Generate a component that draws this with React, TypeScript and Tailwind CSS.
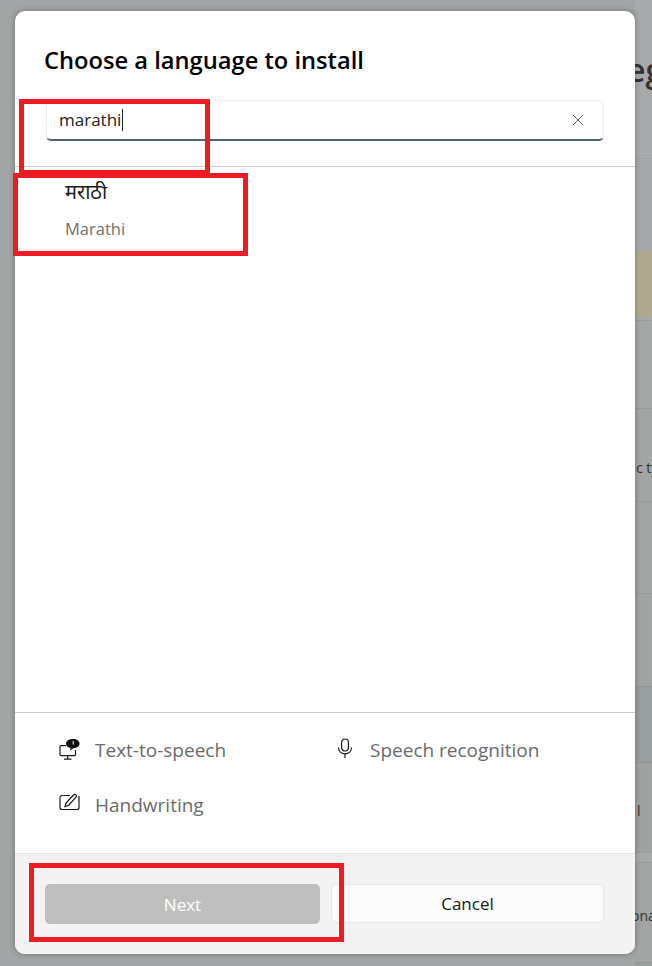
const font = { fontFamily: '"Open Sans", "Noto Sans", "Noto Sans Devanagari", "Lohit Devanagari", sans-serif' };

function SpeechIcon() {
    return (
        <svg width="22" height="22" viewBox="0 0 22 22" fill="none" stroke="#1a1a1a" strokeWidth="1.2" className="block">
            <path d="M7 6.600H2a1 1 0 0 0-1 1v8a1 1 0 0 0 1 1h13.500a1 1 0 0 0 1-1V11" />
            <path d="M8.700 16.700v3.300M5 20.200h7.500" />
            <path d="M14 0C10 0 7 2 7 4.800c0 2.200 1.900 3.800 4.600 4.200L11 11.500l3.800-2.500C18 8.800 20.500 7.200 20.500 4.700 20.500 2 18 0 14 0Z" fill="#111" stroke="none" />
            <path d="M14.200 2v3.500" stroke="#fff" strokeWidth="1" />
        </svg>
    );
}

function PenIcon() {
    return (
        <svg width="21" height="18" viewBox="0 0 21 18" fill="none" stroke="#1a1a1a" strokeWidth="1.2" className="block">
            <path d="M11 2.500H3a2 2 0 0 0-2 2v10a2 2 0 0 0 2 2h15a2 2 0 0 0 2-2V3" />
            <path d="M6 13.500l1-3.500 7.500-8a1.500 1.500 0 0 1 2.500 2.200l-7.300 8L6 13.500Z" />
        </svg>
    );
}

function MicIcon() {
    return (
        <svg width="16" height="21" viewBox="0 0 16 21" fill="none" stroke="#1a1a1a" strokeWidth="1.2" className="block">
            <rect x="4.600" y="1" width="6.800" height="12" rx="3.400" />
            <path d="M1.500 9.500c0 3.800 2.800 6.300 6.500 6.300s6.500-2.500 6.500-6.300M8 15.800V20" />
        </svg>
    );
}

function Feature({ icon, label, iconBox }: { icon: React.ReactNode; label: string; iconBox: string }) {
    return (
        <div className="flex items-center h-[55px]">
            <div className={iconBox}>{icon}</div>
            <span className="text-[19px] text-[#6b6b6b]">{label}</span>
        </div>
    );
}

function BackdropRow({ className, children }: { className: string; children?: React.ReactNode }) {
    return <div className={className}>{children}</div>;
}

export default function App() {
    return (
        <div className="relative w-[652px] h-[966px] overflow-hidden bg-[#a2a5a5]" style={font}>
            {/* page behind the dialog, only the right edge shows */}
            <div className="ml-auto w-[17px] h-full flex flex-col text-[#333333] overflow-hidden">
                <BackdropRow className="h-[154px] bg-[#a8a9ab] border-b border-[#b0b1b2] overflow-hidden whitespace-nowrap">
                    <div className="pt-[50px] text-[32px] leading-[40px] font-semibold -ml-[8px]">eg</div>
                </BackdropRow>
                <BackdropRow className="h-[97px] bg-[#a7a8a9]" />
                <BackdropRow className="h-[65px] bg-[#b0a98f]" />
                <BackdropRow className="h-[4px] bg-[#a8a9a9]" />
                <BackdropRow className="h-[88px] bg-[#a5a6a6] border-t border-[#9b9c9c]" />
                <BackdropRow className="h-[93px] bg-[#a3a4a4] border-t border-[#979a9a] flex items-start whitespace-nowrap text-[14px] pt-[48px] pl-[1px]">c ty</BackdropRow>
                <BackdropRow className="h-[92px] bg-[#a3a4a4] border-t border-[#979a9a]" />
                <BackdropRow className="h-[93px] bg-[#a2a4a4] border-t border-[#979a9a]" />
                <BackdropRow className="h-[76px] bg-[#99a09f] border-t border-[#90999a]" />
                <BackdropRow className="h-[90px] bg-[#a0a2a2] border-t border-[#939696] text-[14px] pt-[37px] pl-[2px]">l</BackdropRow>
                <BackdropRow className="h-[10px] bg-[#a8a9a9] border-t border-[#9a9b9b]" />
                <BackdropRow className="h-[100px] bg-[#a3a4a4] border-t border-[#9a9b9b] whitespace-nowrap text-[14px] pt-[42px] -ml-[4px]">ona</BackdropRow>
                <BackdropRow className="h-[4px] bg-[#98a09f] border-t border-[#8f9695]" />
            </div>

            {/* dialog */}
            <div className="absolute left-[15px] top-[11px] w-[620px] h-[943px] bg-white rounded-[10px] flex flex-col overflow-hidden shadow-[0_0_6px_rgba(0,0,0,0.3)]">
                <div className="h-[156px] shrink-0 border-b border-[#cccccc] px-[29px]">
                    <h1 className="pt-[31px] h-[89px] text-[23.7px] leading-[36px] font-semibold text-black">Choose a language to install</h1>
                    <div className="ml-[2px] w-[558px] h-[41px] bg-white border border-[#efefef] border-b-2 border-b-[#4f6572] rounded-[5px] flex items-center justify-between pl-[12px] pr-[19px]">
                        <span className="text-[17px] text-[#222222] border-r border-[#222222] leading-[22px] pr-[1px]">marathi</span>
                        <svg width="12" height="12" viewBox="0 0 12 12" stroke="#5c5c5c" strokeWidth="1">
                            <path d="M1 1l10 10M11 1L1 11" />
                        </svg>
                    </div>
                </div>

                <div className="flex-1 pl-[50px] pt-[12px]">
                    <div className="text-[20px] leading-[26px] text-[#1a1a1a]">मराठी</div>
                    <div className="mt-[12px] text-[16.500px] leading-[24px] text-[#6f6f6f]">Marathi</div>
                </div>

                <div className="h-[141px] shrink-0 border-t border-[#cccccc] pl-[44px] pt-[10px] grid grid-cols-[278px_1fr] content-start">
                    <Feature icon={<SpeechIcon />} label="Text-to-speech" iconBox="w-[36px] -mt-[2px]" />
                    <Feature icon={<MicIcon />} label="Speech recognition" iconBox="w-[33px] -mt-[5px]" />
                    <Feature icon={<PenIcon />} label="Handwriting" iconBox="w-[36px] -mt-[8px]" />
                </div>

                <div className="h-[101px] shrink-0 bg-[#f3f3f3] border-t border-[#e6e6e6] flex gap-[11px] pl-[30px] pt-[30px]">
                    <button className="w-[275px] h-[40px] pt-[1px] rounded-[5px] bg-[#bfbfbf] text-white text-[17px]">Next</button>
                    <button className="w-[273px] h-[39px] pt-[1px] rounded-[5px] bg-[#fbfbfb] border border-[#e8e8e8] text-[#1a1a1a] text-[17px]">Cancel</button>
                </div>
            </div>

            {/* red annotation boxes */}
            <div className="absolute left-[19px] top-[99px] w-[191px] h-[76px] border-[5px] border-[#ed1c24]" />
            <div className="absolute left-[13px] top-[173px] w-[235px] h-[83px] border-[5px] border-[#ed1c24]" />
            <div className="absolute left-[29px] top-[863px] w-[315px] h-[79px] border-[5px] border-[#ed1c24]" />
        </div>
    );
}
